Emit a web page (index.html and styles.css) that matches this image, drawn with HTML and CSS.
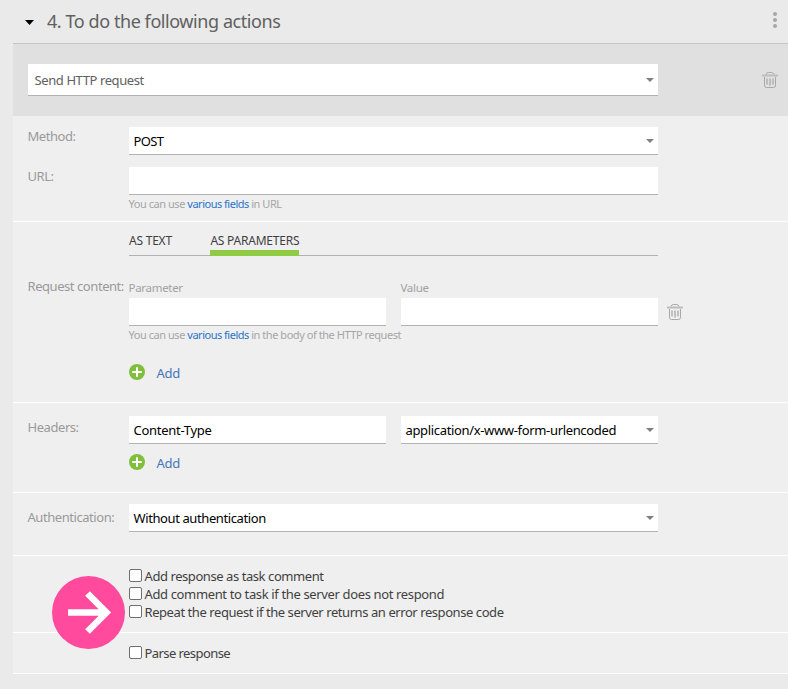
FILE: index.html
```html
<!DOCTYPE html>
<html lang="en">
<head>
<meta charset="utf-8">
<title>Actions</title>
<link rel="stylesheet" href="styles.css">
</head>
<body>
<svg class="defs" width="0" height="0">
  <symbol id="trash" viewBox="0 0 16 17">
    <path d="M0 3.500H16" stroke="#bdbdbd" stroke-width="2"/>
    <path d="M4 2.500Q4.500.5 6.300.5H9.700Q11.500.5 12 2.500M2.500 5V13.500Q2.500 15.500 4.500 15.500H11.500Q13.500 15.500 13.500 13.500V5" fill="none" stroke="#a8a8a8"/>
    <path d="M5 6.500V12.500M8 6.500V13.500M11 6.500V12.500" stroke="#bababa" stroke-width="1.800"/>
  </symbol>
  <symbol id="plus" viewBox="0 0 16 16">
    <circle cx="8" cy="8" r="8" fill="#80bf3b"/>
    <path d="M8 3.200V12.800M3.200 8H12.800" stroke="#fff" stroke-width="2"/>
  </symbol>
  <symbol id="caret" viewBox="0 0 8 4">
    <path d="M0 0H8L4 4Z" fill="#808080"/>
  </symbol>
</svg>
<main class="block">
  <header class="head">
    <svg class="toggle" viewBox="0 0 9 5"><path d="M0 0H9L4.500 5Z" fill="#000"/></svg>
    <h1 class="title">4. To do the following actions</h1>
    <svg class="dots" viewBox="0 0 4 16" fill="#a7a7a7"><circle cx="2" cy="2" r="2"/><circle cx="2" cy="8" r="2"/><circle cx="2" cy="14" r="2"/></svg>
  </header>
  <section class="action">
    <div class="field tall"><span>Send HTTP request</span><svg class="caret"><use href="#caret"/></svg></div>
    <svg class="trash"><use href="#trash"/></svg>
  </section>
  <section class="row request">
    <div class="line"><label class="label">Method:</label><div class="field"><span class="method">POST</span><svg class="caret"><use href="#caret"/></svg></div></div>
    <div class="line"><label class="label">URL:</label><div class="field"></div></div>
    <p class="hint">You can use <a>various fields</a> in URL</p>
  </section>
  <section class="row content">
    <nav class="tabs"><span class="tab">AS TEXT</span><span class="tab active">AS PARAMETERS</span></nav>
    <div class="params">
      <label class="label req">Request content:</label>
      <div class="param"><span class="caption">Parameter</span><div class="field half"></div></div>
      <div class="param"><span class="caption">Value</span><div class="field half"></div></div>
      <svg class="trash"><use href="#trash"/></svg>
    </div>
    <p class="hint">You can use <a>various fields</a> in the body of the HTTP request</p>
    <div class="add"><svg><use href="#plus"/></svg><span>Add</span></div>
  </section>
  <section class="row headers">
    <div class="line"><label class="label">Headers:</label><div class="field half"><span class="name">Content-Type</span></div><div class="field half"><span>application/x-www-form-urlencoded</span><svg class="caret"><use href="#caret"/></svg></div></div>
    <div class="add"><svg><use href="#plus"/></svg><span>Add</span></div>
  </section>
  <section class="row auth">
    <div class="line"><label class="label">Authentication:</label><div class="field"><span>Without authentication</span><svg class="caret"><use href="#caret"/></svg></div></div>
  </section>
  <section class="row checks">
    <label class="check first"><i></i><span>Add response as task comment</span></label>
    <label class="check"><i></i><span>Add comment to task if the server does not respond</span></label>
    <label class="check repeat"><i></i><span>Repeat the request if the server returns an error response code</span></label>
    <svg class="pointer" viewBox="0 0 73 73"><circle cx="36.500" cy="36.500" r="36.500" fill="#ff4a9d"/><path d="M16 36.500H54M35.500 17.500L54.500 36.500L35.500 55.500" fill="none" stroke="#fff" stroke-width="6.600"/></svg>
  </section>
  <section class="row parse">
    <label class="check"><i></i><span>Parse response</span></label>
  </section>
</main>
</body>
</html>
```
FILE: styles.css
```css
* { box-sizing: border-box; }
body { margin: 0; min-height: 689px; background: #eaeaea; font: 13px/18px "Noto Sans", "Open Sans", sans-serif; letter-spacing: -0.25px; color: #3f3f3f; white-space: nowrap; overflow: hidden; }
.defs { display: block; height: 0; }
svg { display: block; flex: none; }
.block { margin-left: 13px; width: 775px; }
.head { display: flex; align-items: center; height: 44px; padding: 0 11px 3px 12px; border-bottom: 1px solid #c5c5c5; }
.toggle { width: 9px; height: 5px; margin-top: 5px; }
.title { margin: 2px 0 0 13px; font-size: 18px; line-height: 24px; font-weight: 400; letter-spacing: -0.43px; color: #606060; }
.dots { width: 4px; height: 16px; margin-left: auto; }
.action { display: flex; align-items: flex-start; height: 72px; padding: 20px 10px 0 15px; background: #e0e0e0; }
.action .trash { margin: 8px 0 0 auto; }
.trash { width: 16px; height: 17px; }
.field { display: flex; align-items: center; width: 529px; height: 28px; padding: 0 4.5px; background: #fff; border-bottom: 1px solid #b2b2b2; color: #000; letter-spacing: -0.4px; }
.half { width: 257px; }
.tall { width: 630px; height: 32px; padding: 0 4.5px 0 6.5px; color: #606060; }
.caret { width: 8px; height: 4px; margin: 0 0 0 auto; }
.method { letter-spacing: -0.6px; }
.name { letter-spacing: -0.28px; }
.row { background: #efefef; border-bottom: 1px solid #fff; }
.line { display: flex; align-items: flex-start; }
.label { width: 101.5px; flex: none; margin-left: 14.5px; color: #9a9a9a; letter-spacing: -0.44px; }
.request { height: 106px; padding-top: 11px; }
.request .line + .line { margin-top: 12px; }
.hint { margin: 1px 0 0 115.5px; font-size: 11px; line-height: 16px; color: #a6a6a6; letter-spacing: -0.45px; }
.hint a { color: #2a74cb; letter-spacing: -0.5px; }
.content { height: 181px; }
.tabs { display: flex; gap: 38.5px; width: 529px; height: 34px; margin-left: 116px; border-bottom: 1px solid #b2b2b2; font-size: 12px; line-height: 38px; letter-spacing: -0.22px; }
.tab { height: 34px; }
.active { border-bottom: 6px solid #8fcb43; }
.params { display: flex; align-items: flex-start; margin-top: 22px; }
.param { margin-right: 15px; }
.req { margin-top: -1px; }
.caption { display: block; height: 20px; margin-left: -0.5px; line-height: 20px; font-size: 11.5px; color: #a2a2a2; letter-spacing: -0.3px; }
.params .trash { margin: 26px 0 0 -6px; }
.add { display: flex; margin-left: 116px; gap: 11.5px; color: #4675b8; }
.add svg { width: 16px; height: 16px; }
.content .add { margin-top: 21px; }
.headers { height: 90px; padding-top: 13px; }
.headers .label { padding-top: 2px; }
.headers .field + .field { margin-left: 15px; padding-left: 4.5px; letter-spacing: -0.34px; }
.headers .add { margin-top: 10px; }
.auth { height: 63px; padding-top: 11px; }
.auth .label { padding-top: 4px; }
.checks { position: relative; height: 77px; padding-top: 11px; }
.check { display: flex; height: 18px; margin-left: 116px; gap: 2.5px; line-height: 18px; letter-spacing: -0.36px; }
.check i { width: 13px; height: 13px; margin-top: 2px; flex: none; border: 1px solid #6f6f6f; border-radius: 2px; background: #fff; }
.first { letter-spacing: -0.43px; }
.repeat { letter-spacing: -0.43px; }
.pointer { position: absolute; z-index: 1; left: 39px; top: 20px; width: 73px; height: 73px; }
.parse { height: 41px; padding-top: 11px; }
.parse .check { letter-spacing: -0.57px; }
```
